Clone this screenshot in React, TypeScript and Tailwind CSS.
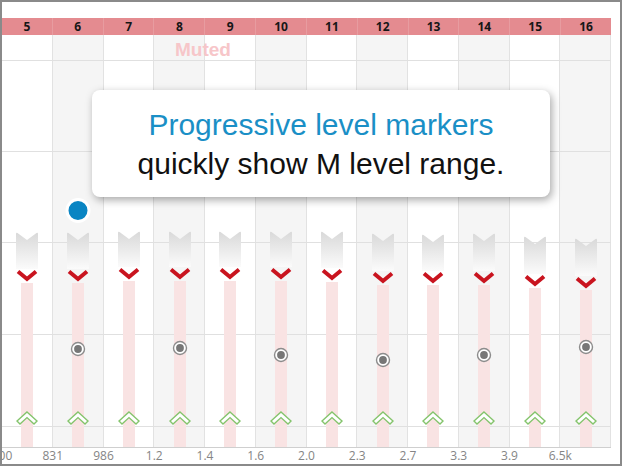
import React from 'react'

type Band = { n: number; tab: number; chev: number; dot?: number }

// y values are measured from the top of the plot body
const bands: Band[] = [
  { n: 5, tab: 197, chev: 240 },
  { n: 6, tab: 197, chev: 240, dot: 314 },
  { n: 7, tab: 196, chev: 238 },
  { n: 8, tab: 196, chev: 238, dot: 313 },
  { n: 9, tab: 196, chev: 238 },
  { n: 10, tab: 196, chev: 238, dot: 320 },
  { n: 11, tab: 196, chev: 239 },
  { n: 12, tab: 198, chev: 242, dot: 325 },
  { n: 13, tab: 199, chev: 242 },
  { n: 14, tab: 198, chev: 242, dot: 320 },
  { n: 15, tab: 201, chev: 245 },
  { n: 16, tab: 203, chev: 247, dot: 312 },
]

const freqs = ['700', '831', '986', '1.2', '1.4', '1.6', '2.0', '2.3', '2.7', '3.3', '3.9', '6.5k']

const gridRows = [25, 116, 207, 299, 391]

function Tab({ top, height }: { top: number; height: number }) {
  return (
    <svg
      className="absolute left-1/2 -translate-x-1/2"
      style={{ top }}
      width={22}
      height={height}
      viewBox={`0 0 22 ${height}`}
    >
      <defs>
        <linearGradient id="tabFade" x1="0" y1="0" x2="0" y2="1">
          <stop offset="0" stopColor="#d9d9d9" />
          <stop offset="1" stopColor="#fbfbfb" />
        </linearGradient>
      </defs>
      <path
        d={`M0 2 Q0 0 1.5 1 L11 8 L20.5 1 Q22 0 22 2 L22 ${height} L0 ${height} Z`}
        fill="url(#tabFade)"
      />
    </svg>
  )
}

function BandMarkers({ band }: { band: Band }) {
  return (
    <div className="relative flex-1">
      {/* level track */}
      <div className="absolute bottom-0 left-1/2 w-[12px] -translate-x-1/2 bg-[#f9e3e3]" style={{ top: band.chev + 8 }} />

      <Tab top={band.tab} height={band.chev - band.tab - 6} />

      {/* upper level */}
      <svg className="absolute left-1/2 -translate-x-1/2" style={{ top: band.chev - 6 }} width={24} height={13}>
        <polyline points="3,2.5 12,10 21,2.5" fill="none" stroke="#c9141f" strokeWidth={4} />
      </svg>

      {/* measured level */}
      {band.dot !== undefined && (
        <svg className="absolute left-1/2 -translate-x-1/2" style={{ top: band.dot - 8 }} width={16} height={16}>
          <circle cx={8} cy={8} r={6.5} fill="#fff" stroke="#8c8c8c" strokeWidth={1.4} />
          <circle cx={8} cy={8} r={3.9} fill="#777" />
        </svg>
      )}

      {/* lower level */}
      <svg className="absolute left-1/2 top-[376px] -translate-x-1/2" width={22} height={14}>
        <polygon points="11,1 21,10 18,13 11,6.6 4,13 1,10" fill="#fff" stroke="#84c46c" strokeWidth={1.4} />
      </svg>

      {band.n === 6 && (
        <div className="absolute left-1/2 top-[163px] h-[25px] w-[25px] -translate-x-1/2 rounded-full border-[3px] border-white bg-[#0a85c3]" />
      )}
    </div>
  )
}

export default function App() {
  return (
    <div className="relative h-[466px] w-[622px] overflow-hidden border-2 border-[#8a8a8a] bg-white pt-4">
      {/* band header */}
      <div className="flex h-[17px] w-[609px] bg-[#e48b90] font-['Noto_Sans',sans-serif] text-[12px] font-bold leading-[17px] text-[#161616]">
        {bands.map((b) => (
          <div key={b.n} className="flex-1 border-r border-[#e79ca0] text-center last:border-r-0">
            {b.n}
          </div>
        ))}
      </div>

      {/* plot body */}
      <div className="relative h-[413px] w-[609px] border-b border-[#cfcfcf]">
        <div className="flex h-full">
          {bands.map((b, i) => (
            <div
              key={b.n}
              className={`flex-1 border-r border-[#e2e2e2] ${i % 2 === 1 ? 'bg-[#f5f5f5]' : 'bg-white'}`}
            />
          ))}
        </div>

        <div className="absolute inset-0">
          {gridRows.map((y) => (
            <div key={y} className="absolute left-0 right-0 h-px bg-[#e0e0e0]" style={{ top: y }} />
          ))}
        </div>

        <div className="absolute left-[173px] top-[5px] font-['Liberation_Sans',sans-serif] text-[19px] font-bold leading-none text-[#f7c6c9]">
          Muted
        </div>

        <div className="absolute inset-0 flex">
          {bands.map((b) => (
            <BandMarkers key={b.n} band={b} />
          ))}
        </div>
      </div>

      {/* frequency axis */}
      <div className="flex h-[15px] w-[609px] overflow-hidden font-['Open_Sans',sans-serif] text-[12px] leading-[15px] text-[#858585]">
        {freqs.map((f) => (
          <div key={f} className="flex-1">
            <div className="-translate-x-1/2 text-center">{f}</div>
          </div>
        ))}
      </div>

      {/* callout */}
      <div className="absolute left-[90px] top-[88px] flex h-[107px] w-[458px] flex-col items-center justify-center rounded-lg bg-white font-['Liberation_Sans',sans-serif] text-[30px] leading-[39px] shadow-[2px_3px_9px_rgba(0,0,0,0.35)]">
        <div className="text-[#1a8fc6]">Progressive level markers</div>
        <div className="text-[#111]">quickly show M level range.</div>
      </div>
    </div>
  )
}
